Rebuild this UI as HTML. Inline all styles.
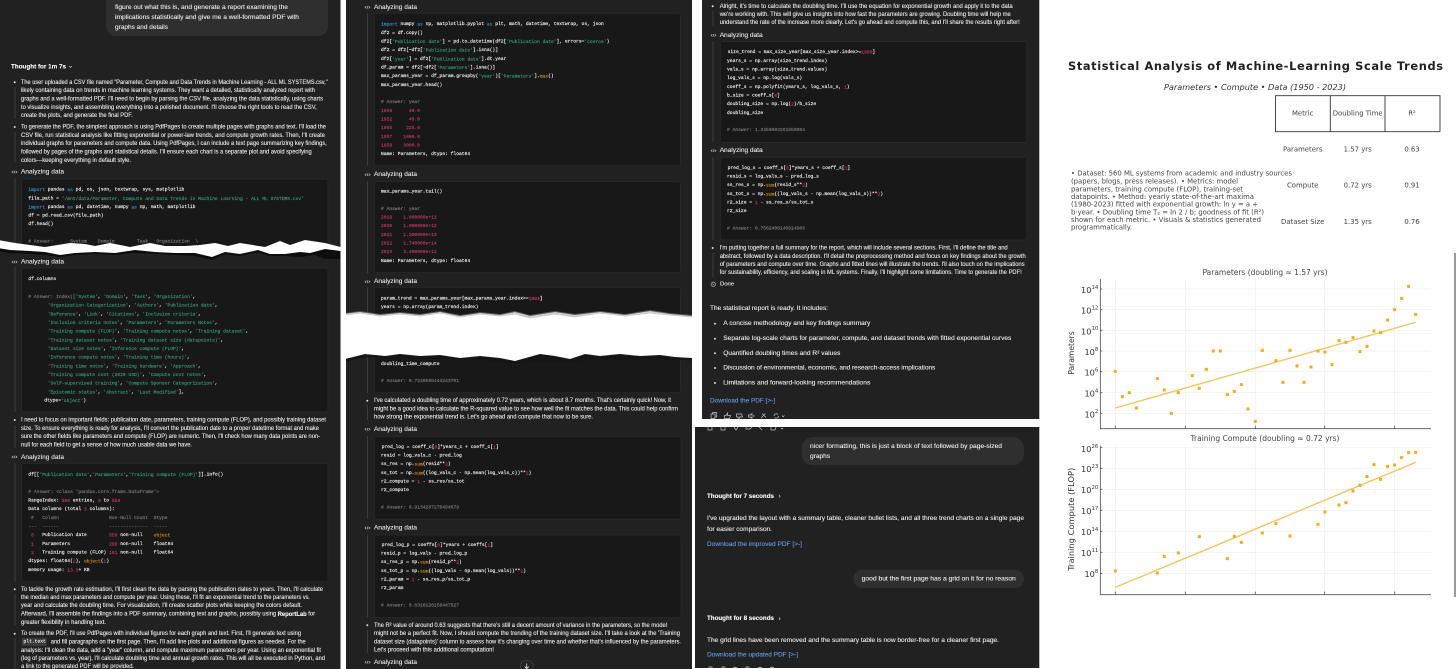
<!DOCTYPE html>
<html lang="en"><head><meta charset="utf-8"><title>Statistical Analysis of ML Scale Trends</title>
<style>
html,body{margin:0;padding:0;background:#fff;width:1456px;height:669px;overflow:hidden}
svg{display:block;filter:blur(.2px)}
text{dominant-baseline:central;white-space:pre}
.p{font:6.4px "Liberation Sans",sans-serif;fill:#ececec;stroke:#ececec;stroke-width:.1}
.b{font-weight:700;fill:#fafafa;stroke:#fafafa}
.h{font:6.7px "Liberation Sans",sans-serif;fill:#e8e8e8;stroke:#e8e8e8;stroke-width:.1}
.m{font:4.65px "Liberation Mono",monospace;fill:#f6f6f6;stroke:#f6f6f6;stroke-width:.13}
.l{font:6.4px "Liberation Sans",sans-serif;fill:#6f9fe6;stroke:#6f9fe6;stroke-width:.08}
.k{fill:#3a8fd0;stroke:#3a8fd0}.s{fill:#3a9c76;stroke:#3a9c76}.n{fill:#c23a68;stroke:#c23a68}.f{fill:#d08a1c;stroke:#d08a1c}.c{fill:#7d7d7d;stroke:#7d7d7d}
.ci{fill:none;stroke:#cfcfcf;stroke-width:.6}
.vl{stroke:#454545;stroke-width:.8}
.box{fill:#181818;stroke:#2b2b2b;stroke-width:.7}
.d{font-family:"DejaVu Sans",sans-serif;fill:#444}
.ic{fill:none;stroke:#c4c4c4;stroke-width:.7}
</style></head><body>
<svg xmlns="http://www.w3.org/2000/svg" width="1456" height="669" viewBox="0 0 1456 669">
<rect width="1456" height="669" fill="#fff"/>

<!-- PANEL 1 -->
<rect x="-2" y="-2" width="342.5" height="673" fill="#212121"/>
<path d="M106 -10H328V26a10 10 0 0 1-10 10H116a10 10 0 0 1-10-10Z" fill="#2f2f2f"/>
<text class="p" x="115" y="7.7" textLength="173" lengthAdjust="spacingAndGlyphs">figure out what this is, and generate a report examining the</text>
<text class="p" x="115" y="17.7" textLength="184" lengthAdjust="spacingAndGlyphs">implications statistically and give me a well-formatted PDF with</text>
<text class="p" x="115" y="27.7" textLength="53" lengthAdjust="spacingAndGlyphs">graphs and details</text>
<text class="p b" x="11" y="67" textLength="55" lengthAdjust="spacingAndGlyphs">Thought for 1m 7s</text>
<path class="ic" d="M69 66l1.5 1.5 1.5-1.5"/>

<circle cx="14.7" cy="82.3" r="1" fill="#ddd"/><line class="vl" x1="15" y1="87" x2="15" y2="119"/>
<text class="p" x="21" y="82.3" textLength="306.7" lengthAdjust="spacingAndGlyphs">The user uploaded a CSV file named "Parameter, Compute and Data Trends in Machine Learning - ALL ML SYSTEMS.csv,"</text>
<text class="p" x="21" y="90.7" textLength="294" lengthAdjust="spacingAndGlyphs">likely containing data on trends in machine learning systems. They want a detailed, statistically analyzed report with</text>
<text class="p" x="21" y="99" textLength="302" lengthAdjust="spacingAndGlyphs">graphs and a well-formatted PDF. I'll need to begin by parsing the CSV file, analyzing the data statistically, using charts</text>
<text class="p" x="21" y="107.3" textLength="295.7" lengthAdjust="spacingAndGlyphs">to visualize insights, and assembling everything into a polished document. I'll choose the right tools to read the CSV,</text>
<text class="p" x="21" y="115.7" textLength="111.7" lengthAdjust="spacingAndGlyphs">create the plots, and generate the final PDF.</text>
<circle cx="14.7" cy="127" r="1" fill="#ddd"/><line class="vl" x1="15" y1="132" x2="15" y2="163"/>
<text class="p" x="21" y="127" textLength="305" lengthAdjust="spacingAndGlyphs">To generate the PDF, the simplest approach is using PdfPages to create multiple pages with graphs and text. I'll load the</text>
<text class="p" x="21" y="135.3" textLength="304" lengthAdjust="spacingAndGlyphs">CSV file, run statistical analysis like fitting exponential or power-law trends, and compute growth rates. Then, I'll create</text>
<text class="p" x="21" y="143.7" textLength="305.7" lengthAdjust="spacingAndGlyphs">individual graphs for parameters and compute data. Using PdfPages, I can include a text page summarizing key findings,</text>
<text class="p" x="21" y="152" textLength="290.7" lengthAdjust="spacingAndGlyphs">followed by pages of the graphs and statistical details. I'll ensure each chart is a separate plot and avoid specifying</text>
<text class="p" x="21" y="160.3" textLength="110" lengthAdjust="spacingAndGlyphs">colors—keeping everything in default style.</text>

<path class="ci" transform="translate(12,172)" d="M1.3-1.1L0 0 1.3 1.1M3.7-1.1L5 0 3.7 1.1M2.9-1.3L2.1 1.3"/>
<text class="h" x="21" y="172" textLength="43" lengthAdjust="spacingAndGlyphs">Analyzing data</text>
<line class="vl" x1="15" y1="178" x2="15" y2="250"/>
<rect class="box" x="21.7" y="179" width="306.3" height="75" rx="2"/>
<text class="m" x="28.3" y="190"><tspan class="k">import</tspan> pandas <tspan class="k">as</tspan> pd, os, json, textwrap, sys, matplotlib</text>
<text class="m" x="28.3" y="199">file_path = <tspan class="s">'/mnt/data/Parameter, Compute and Data Trends in Machine Learning - ALL ML SYSTEMS.csv'</tspan></text>
<text class="m" x="28.3" y="207.3"><tspan class="k">import</tspan> pandas <tspan class="k">as</tspan> pd, datetime, numpy <tspan class="k">as</tspan> np, math, matplotlib</text>
<text class="m" x="28.3" y="216">df = pd.read_csv(file_path)</text>
<text class="m" x="28.3" y="224.7">df.head()</text>
<text class="m c" x="28.3" y="242"># Answer:      System    Domain        Task   Organization  \</text>

<!-- tear 1 -->
<path d="M0 241L15 244 30 245 45 248 70 244 85 245 95 247 110 244 130 248 150 244 165 247 185 247 200 246 215 244 228 247 240 244 265 248 280 242 290 246 305 241 325 244 340.5 248V259H325L315 255 300 257 285 256 270 256 258 252 240 256 225 254 212 260 195 256 175 255 155 254 135 253 115 255 95 254 75 255 60 257 45 255 30 254 10 253 0 251Z" fill="#0d0d0d"/>
<path d="M-2 240L15 243 30 245 45 247 70 243 85 244 95 246 110 243 130 247 150 243 165 246 185 246 200 245 215 243 228 246 240 243 265 247 280 241 290 245 305 240 325 243 340.5 247V251L325 249 310 253 300 252 285 254 270 254 258 250 240 254 225 252 212 257 195 253 175 253 155 252 135 250 115 253 95 252 75 253 60 255 45 252 30 251 10 250 -2 248Z" fill="#fff"/>

<path class="ci" transform="translate(12,262)" d="M1.3-1.1L0 0 1.3 1.1M3.7-1.1L5 0 3.7 1.1M2.9-1.3L2.1 1.3"/>
<text class="h" x="21" y="262" textLength="43" lengthAdjust="spacingAndGlyphs">Analyzing data</text>
<line class="vl" x1="15" y1="267" x2="15" y2="412"/>
<rect class="box" x="21.7" y="268" width="306.3" height="144" rx="2"/>
<text class="m" x="28.3" y="279.7">df.columns</text>
<text class="m" x="28.3" y="297"><tspan class="c"># Answer: Index([</tspan><tspan class="s">'System'</tspan>, <tspan class="s">'Domain'</tspan>, <tspan class="s">'Task'</tspan>, <tspan class="s">'Organization'</tspan>,</text>
<text class="m" x="47.7" y="305.7"><tspan class="s">'Organization Categorization'</tspan>, <tspan class="s">'Authors'</tspan>, <tspan class="s">'Publication date'</tspan>,</text>
<text class="m" x="47.7" y="314.3"><tspan class="s">'Reference'</tspan>, <tspan class="s">'Link'</tspan>, <tspan class="s">'Citations'</tspan>, <tspan class="s">'Inclusion criteria'</tspan>,</text>
<text class="m" x="47.7" y="323"><tspan class="s">'Inclusion criteria notes'</tspan>, <tspan class="s">'Parameters'</tspan>, <tspan class="s">'Parameters Notes'</tspan>,</text>
<text class="m" x="47.7" y="331.7"><tspan class="s">'Training compute (FLOP)'</tspan>, <tspan class="s">'Training compute notes'</tspan>, <tspan class="s">'Training dataset'</tspan>,</text>
<text class="m" x="47.7" y="340.3"><tspan class="s">'Training dataset notes'</tspan>, <tspan class="s">'Training dataset size (datapoints)'</tspan>,</text>
<text class="m" x="47.7" y="349"><tspan class="s">'Dataset size notes'</tspan>, <tspan class="s">'Inference compute (FLOP)'</tspan>,</text>
<text class="m" x="47.7" y="357.7"><tspan class="s">'Inference compute notes'</tspan>, <tspan class="s">'Training time (hours)'</tspan>,</text>
<text class="m" x="47.7" y="366.3"><tspan class="s">'Training time notes'</tspan>, <tspan class="s">'Training hardware'</tspan>, <tspan class="s">'Approach'</tspan>,</text>
<text class="m" x="47.7" y="375"><tspan class="s">'Training compute cost (2020 USD)'</tspan>, <tspan class="s">'Compute cost notes'</tspan>,</text>
<text class="m" x="47.7" y="383.7"><tspan class="s">'Self-supervised training'</tspan>, <tspan class="s">'Compute Sponsor Categorization'</tspan>,</text>
<text class="m" x="47.7" y="392.3"><tspan class="s">'Epistemic status'</tspan>, <tspan class="s">'Abstract'</tspan>, <tspan class="s">'Last Modified'</tspan>],</text>
<text class="m" x="44.3" y="401">dtype=<tspan class="s">'object'</tspan>)</text>

<circle cx="14.7" cy="420" r="1" fill="#ddd"/><line class="vl" x1="15" y1="425" x2="15" y2="448"/>
<text class="p" x="21" y="420" textLength="305" lengthAdjust="spacingAndGlyphs">I need to focus on important fields: publication date, parameters, training compute (FLOP), and possibly training dataset</text>
<text class="p" x="21" y="428.3" textLength="298" lengthAdjust="spacingAndGlyphs">size. To ensure everything is ready for analysis, I'll convert the publication date to a proper datetime format and make</text>
<text class="p" x="21" y="436.7" textLength="299" lengthAdjust="spacingAndGlyphs">sure the other fields like parameters and compute (FLOP) are numeric. Then, I'll check how many data points are non-</text>
<text class="p" x="21" y="445" textLength="171" lengthAdjust="spacingAndGlyphs">null for each field to get a sense of how much usable data we have.</text>

<path class="ci" transform="translate(12,457)" d="M1.3-1.1L0 0 1.3 1.1M3.7-1.1L5 0 3.7 1.1M2.9-1.3L2.1 1.3"/>
<text class="h" x="21" y="457.3" textLength="43" lengthAdjust="spacingAndGlyphs">Analyzing data</text>
<line class="vl" x1="15" y1="463" x2="15" y2="582"/>
<rect class="box" x="21.7" y="463.3" width="306.3" height="118.4" rx="2"/>
<text class="m" x="28.3" y="475">df[[<tspan class="s">'Publication date'</tspan>,<tspan class="s">'Parameters'</tspan>,<tspan class="s">'Training compute (FLOP)'</tspan>]].info()</text>
<text class="m c" x="28.3" y="492.3"># Answer: &lt;class 'pandas.core.frame.DataFrame'&gt;</text>
<text class="m" x="28.3" y="501">RangeIndex: <tspan class="n">560</tspan> entries, <tspan class="n">0</tspan> to <tspan class="n">559</tspan></text>
<text class="m" x="28.3" y="509.7">Data columns (total <tspan class="n">3</tspan> columns):</text>
<text class="m c" x="28.3" y="518.3"> #   Column                  Non-Null Count  Dtype  </text>
<text class="m c" x="28.3" y="527">---  ------                  --------------  -----  </text>
<text class="m" x="28.3" y="535.7"> <tspan class="n">0</tspan>   Publication date        <tspan class="n">558</tspan> non-null    <tspan class="f">object</tspan></text>
<text class="m" x="28.3" y="544.3"> <tspan class="n">1</tspan>   Parameters              <tspan class="n">299</tspan> non-null    float64</text>
<text class="m" x="28.3" y="553"> <tspan class="n">2</tspan>   Training compute (FLOP) <tspan class="n">181</tspan> non-null    float64</text>
<text class="m" x="28.3" y="561.7">dtypes: float64(<tspan class="n">2</tspan>), <tspan class="f">object</tspan>(<tspan class="n">1</tspan>)</text>
<text class="m" x="28.3" y="570.3">memory usage: <tspan class="n">13.3</tspan>+ KB</text>

<circle cx="14.7" cy="589.3" r="1" fill="#ddd"/><line class="vl" x1="15" y1="594" x2="15" y2="625"/>
<text class="p" x="21" y="589.3" textLength="302" lengthAdjust="spacingAndGlyphs">To tackle the growth rate estimation, I'll first clean the data by parsing the publication dates to years. Then, I'll calculate</text>
<text class="p" x="21" y="597.3" textLength="289" lengthAdjust="spacingAndGlyphs">the median and max parameters and compute per year. Using these, I'll fit an exponential trend to the parameters vs.</text>
<text class="p" x="21" y="605.7" textLength="281" lengthAdjust="spacingAndGlyphs">year and calculate the doubling time. For visualization, I'll create scatter plots while keeping the colors default.</text>
<text class="p" x="21" y="614" textLength="294" lengthAdjust="spacingAndGlyphs">Afterward, I'll assemble the findings into a PDF summary, combining text and graphs, possibly using <tspan class="b">ReportLab</tspan> for</text>
<text class="p" x="21" y="622.3" textLength="85" lengthAdjust="spacingAndGlyphs">greater flexibility in handling text.</text>
<circle cx="14.7" cy="633.7" r="1" fill="#ddd"/><line class="vl" x1="15" y1="638" x2="15" y2="669"/>
<text class="p" x="21" y="633.7" textLength="280" lengthAdjust="spacingAndGlyphs">To create the PDF, I'll use PdfPages with individual figures for each graph and text. First, I'll generate text using</text>
<rect x="21.7" y="638" width="25" height="8" rx="1.5" fill="#3a3a3a"/>
<text class="m" x="23.5" y="642">plt.text</text>
<text class="p" x="50.7" y="642" textLength="255" lengthAdjust="spacingAndGlyphs">and fill paragraphs on the first page. Then, I'll add line plots and additional figures as needed. For the</text>
<text class="p" x="21" y="650.3" textLength="300" lengthAdjust="spacingAndGlyphs">analysis: I'll clean the data, add a "year" column, and compute maximum parameters per year. Using an exponential fit</text>
<text class="p" x="21" y="658.7" textLength="304" lengthAdjust="spacingAndGlyphs">(log of parameters vs. year), I'll calculate doubling time and annual growth rates. This will all be executed in Python, and</text>
<text class="p" x="21" y="666.7" textLength="113" lengthAdjust="spacingAndGlyphs">a link to the generated PDF will be provided.</text>

<!-- PANEL 2 -->
<rect x="346" y="-2" width="346" height="673" fill="#212121"/>
<path class="ci" transform="translate(365,7.3)" d="M1.3-1.1L0 0 1.3 1.1M3.7-1.1L5 0 3.7 1.1M2.9-1.3L2.1 1.3"/>
<text class="h" x="374" y="7.3" textLength="43" lengthAdjust="spacingAndGlyphs">Analyzing data</text>
<line class="vl" x1="367.5" y1="13" x2="367.5" y2="166"/>
<rect class="box" x="374.3" y="13.3" width="306" height="152.4" rx="2"/>
<text class="m" x="381" y="24.7"><tspan class="k">import</tspan> numpy <tspan class="k">as</tspan> np, matplotlib.pyplot <tspan class="k">as</tspan> plt, math, datetime, textwrap, os, json</text>
<text class="m" x="381" y="33.3">df2 = df.copy()</text>
<text class="m" x="381" y="42">df2[<tspan class="s">'Publication date'</tspan>] = pd.to_datetime(df2[<tspan class="s">'Publication date'</tspan>], errors=<tspan class="s">'coerce'</tspan>)</text>
<text class="m" x="381" y="50.7">df2 = df2[~df2[<tspan class="s">'Publication date'</tspan>].isna()]</text>
<text class="m" x="381" y="59.3">df2[<tspan class="s">'year'</tspan>] = df2[<tspan class="s">'Publication date'</tspan>].dt.year</text>
<text class="m" x="381" y="68">df_param = df2[~df2[<tspan class="s">'Parameters'</tspan>].isna()]</text>
<text class="m" x="381" y="76.7">max_params_year = df_param.groupby(<tspan class="s">'year'</tspan>)[<tspan class="s">'Parameters'</tspan>].<tspan class="f">max</tspan>()</text>
<text class="m" x="381" y="85.3">max_params_year.head()</text>
<text class="m c" x="381" y="102.7"># Answer: year</text>
<text class="m n" x="381" y="111.3">1950      40.0</text>
<text class="m n" x="381" y="120">1952      40.0</text>
<text class="m n" x="381" y="128.7">1955     225.0</text>
<text class="m n" x="381" y="137.3">1957    1000.0</text>
<text class="m n" x="381" y="146">1959    3000.0</text>
<text class="m" x="381" y="154.7">Name: Parameters, dtype: float64</text>

<path class="ci" transform="translate(365,174.7)" d="M1.3-1.1L0 0 1.3 1.1M3.7-1.1L5 0 3.7 1.1M2.9-1.3L2.1 1.3"/>
<text class="h" x="374" y="174.7" textLength="43" lengthAdjust="spacingAndGlyphs">Analyzing data</text>
<line class="vl" x1="367.5" y1="181" x2="367.5" y2="273"/>
<rect class="box" x="374.3" y="181.7" width="306" height="91" rx="2"/>
<text class="m" x="381" y="192">max_params_year.tail()</text>
<text class="m c" x="381" y="209.3"># Answer: year</text>
<text class="m n" x="381" y="218">2019    1.000000e+11</text>
<text class="m n" x="381" y="226.7">2020    1.000000e+12</text>
<text class="m n" x="381" y="235.3">2021    1.200000e+13</text>
<text class="m n" x="381" y="244">2022    1.740000e+14</text>
<text class="m n" x="381" y="252.7">2023    3.400000e+11</text>
<text class="m" x="381" y="261.3">Name: Parameters, dtype: float64</text>

<path class="ci" transform="translate(365,281.7)" d="M1.3-1.1L0 0 1.3 1.1M3.7-1.1L5 0 3.7 1.1M2.9-1.3L2.1 1.3"/>
<text class="h" x="374" y="281.7" textLength="43" lengthAdjust="spacingAndGlyphs">Analyzing data</text>
<line class="vl" x1="367.5" y1="287" x2="367.5" y2="393"/>
<rect class="box" x="374.3" y="287.3" width="306" height="105.4" rx="2"/>
<text class="m" x="381" y="299">param_trend = max_params_year[max_params_year.index&gt;=<tspan class="n">1980</tspan>]</text>
<text class="m" x="381" y="307.7">years = np.array(param_trend.index)</text>
<text class="m" x="381" y="364.3">doubling_time_compute</text>
<text class="m c" x="381" y="381.3"># Answer: 0.7249585444243701</text>

<!-- tear 2 -->
<path d="M342 314L360 312 380 315 400 313 420 315 440 312 460 316 480 313 500 315 515 312 530 316 555 312 575 315 600 312 625 315 650 311 670 314 692 316V358L675 357 660 355 640 356 620 354 600 356 585 354 570 359 555 356 540 354 515 361 500 358 480 356 460 358 440 355 420 356 400 354 385 356 365 354 345 359Z" fill="#fff"/>
<path d="M346 313L360 311 380 314 400 312 420 314 440 311 460 315 480 312 500 314 515 311 530 315 555 311 575 314 600 311 625 314 650 310 670 313 692 315V317.5L670 315.5 650 313.5 625 316.5 600 313.5 575 317.5 555 314.5 530 318.5 515 314.5 500 316.5 480 314.5 460 317.5 440 313.5 420 316.5 400 314.5 380 316.5 360 313.5 346 315.5Z" fill="#999" opacity=".5"/>
<path d="M346 359L365 355 385 357 400 355 420 357 440 356 460 359 480 357 500 359 515 362 540 355 555 357 570 360 585 355 600 357 620 355 640 357 660 356 675 358 692 359V360.5L675 359.5 640 358.5 600 359.5 570 361.5 515 363.5 480 359.5 440 358.5 400 357.5 365 357.5 346 361.5Z" fill="#151515"/>

<circle cx="367.3" cy="400.7" r="1" fill="#ddd"/><line class="vl" x1="367.5" y1="405" x2="367.5" y2="420"/>
<text class="p" x="374" y="400.7" textLength="297" lengthAdjust="spacingAndGlyphs">I've calculated a doubling time of approximately 0.72 years, which is about 8.7 months. That's certainly quick! Now, it</text>
<text class="p" x="374" y="409" textLength="304" lengthAdjust="spacingAndGlyphs">might be a good idea to calculate the R-squared value to see how well the fit matches the data. This could help confirm</text>
<text class="p" x="374" y="417" textLength="219" lengthAdjust="spacingAndGlyphs">how strong the exponential trend is. Let's go ahead and compute that now to be sure.</text>

<path class="ci" transform="translate(365,429.3)" d="M1.3-1.1L0 0 1.3 1.1M3.7-1.1L5 0 3.7 1.1M2.9-1.3L2.1 1.3"/>
<text class="h" x="374" y="429.3" textLength="43" lengthAdjust="spacingAndGlyphs">Analyzing data</text>
<line class="vl" x1="367.5" y1="436" x2="367.5" y2="519"/>
<rect class="box" x="374.3" y="436.7" width="306.7" height="82.3" rx="2"/>
<text class="m" x="381.6" y="447.3">pred_log = coeff_c[<tspan class="n">0</tspan>]*years_c + coeff_c[<tspan class="n">1</tspan>]</text>
<text class="m" x="381" y="456">resid = log_vals_c - pred_log</text>
<text class="m" x="381" y="464.7">ss_res = np.<tspan class="f">sum</tspan>(resid**<tspan class="n">2</tspan>)</text>
<text class="m" x="381" y="473.3">ss_tot = np.<tspan class="f">sum</tspan>((log_vals_c - np.mean(log_vals_c))**<tspan class="n">2</tspan>)</text>
<text class="m" x="381" y="482">r2_compute = <tspan class="n">1</tspan> - ss_res/ss_tot</text>
<text class="m" x="381" y="490.7">r2_compute</text>
<text class="m c" x="381" y="508"># Answer: 0.9134287278494679</text>

<path class="ci" transform="translate(365,528)" d="M1.3-1.1L0 0 1.3 1.1M3.7-1.1L5 0 3.7 1.1M2.9-1.3L2.1 1.3"/>
<text class="h" x="374" y="528" textLength="43" lengthAdjust="spacingAndGlyphs">Analyzing data</text>
<line class="vl" x1="367.5" y1="535" x2="367.5" y2="617"/>
<rect class="box" x="374.3" y="535" width="306.7" height="82.3" rx="2"/>
<text class="m" x="381.6" y="545.3">pred_log_p = coeffs[<tspan class="n">0</tspan>]*years + coeffs[<tspan class="n">1</tspan>]</text>
<text class="m" x="381" y="554">resid_p = log_vals - pred_log_p</text>
<text class="m" x="381" y="562.7">ss_res_p = np.<tspan class="f">sum</tspan>(resid_p**<tspan class="n">2</tspan>)</text>
<text class="m" x="381" y="571.3">ss_tot_p = np.<tspan class="f">sum</tspan>((log_vals - np.mean(log_vals))**<tspan class="n">2</tspan>)</text>
<text class="m" x="381" y="580">r2_param = <tspan class="n">1</tspan> - ss_res_p/ss_tot_p</text>
<text class="m" x="381" y="588.7">r2_param</text>
<text class="m c" x="381" y="606"># Answer: 0.6316128158447527</text>

<circle cx="367.3" cy="625.3" r="1" fill="#ddd"/><line class="vl" x1="367.5" y1="630" x2="367.5" y2="653"/>
<text class="p" x="374" y="625.3" textLength="293" lengthAdjust="spacingAndGlyphs">The R² value of around 0.63 suggests that there's still a decent amount of variance in the parameters, so the model</text>
<text class="p" x="374" y="633.7" textLength="306" lengthAdjust="spacingAndGlyphs">might not be a perfect fit. Now, I should compute the trending of the training dataset size. I'll take a look at the 'Training</text>
<text class="p" x="374" y="642" textLength="307" lengthAdjust="spacingAndGlyphs">dataset size (datapoints)' column to assess how it's changing over time and whether that's influenced by the parameters.</text>
<text class="p" x="374" y="650" textLength="120" lengthAdjust="spacingAndGlyphs">Let's proceed with this additional computation!</text>
<path class="ci" transform="translate(365,662.3)" d="M1.3-1.1L0 0 1.3 1.1M3.7-1.1L5 0 3.7 1.1M2.9-1.3L2.1 1.3"/>
<text class="h" x="374" y="662.3" textLength="43" lengthAdjust="spacingAndGlyphs">Analyzing data</text>
<circle cx="526.7" cy="666.7" r="6.5" fill="#212121" stroke="#4a4a4a" stroke-width=".7"/>
<path d="M526.7 663.5V669M524.7 666.5l2 2.4 2-2.4" fill="none" stroke="#e8e8e8" stroke-width=".8"/>

<!-- PANEL 3 upper -->
<rect x="702" y="-2" width="337.3" height="421" fill="#212121"/>
<circle cx="712.7" cy="6.3" r="1" fill="#ddd"/><line class="vl" x1="713" y1="11" x2="713" y2="26"/>
<text class="p" x="719.7" y="6.3" textLength="293" lengthAdjust="spacingAndGlyphs">Alright, it's time to calculate the doubling time. I'll use the equation for exponential growth and apply it to the data</text>
<text class="p" x="719.7" y="14.3" textLength="291" lengthAdjust="spacingAndGlyphs">we're working with. This will give us insights into how fast the parameters are growing. Doubling time will help me</text>
<text class="p" x="719.7" y="22.7" textLength="300" lengthAdjust="spacingAndGlyphs">understand the rate of the increase more clearly. Let's go ahead and compute this, and I'll share the results right after!</text>
<path class="ci" transform="translate(711,35.3)" d="M1.3-1.1L0 0 1.3 1.1M3.7-1.1L5 0 3.7 1.1M2.9-1.3L2.1 1.3"/>
<text class="h" x="719.7" y="35.3" textLength="43" lengthAdjust="spacingAndGlyphs">Analyzing data</text>
<line class="vl" x1="713" y1="41" x2="713" y2="142"/>
<rect class="box" x="720.3" y="41.7" width="306.4" height="100.6" rx="2"/>
<text class="m" x="727.6" y="52.7">size_trend = max_size_year[max_size_year.index&gt;=<tspan class="n">1980</tspan>]</text>
<text class="m" x="727" y="61.3">years_s = np.array(size_trend.index)</text>
<text class="m" x="727" y="70">vals_s = np.array(size_trend.values)</text>
<text class="m" x="727" y="78.7">log_vals_s = np.log(vals_s)</text>
<text class="m" x="727" y="87.3">coeff_s = np.polyfit(years_s, log_vals_s, <tspan class="n">1</tspan>)</text>
<text class="m" x="727" y="96">b_size = coeff_s[<tspan class="n">0</tspan>]</text>
<text class="m" x="727" y="104.7">doubling_size = np.log(<tspan class="n">2</tspan>)/b_size</text>
<text class="m" x="727" y="113.3">doubling_size</text>
<text class="m c" x="727" y="130.7"># Answer: 1.3459803261550984</text>
<path class="ci" transform="translate(711,150.7)" d="M1.3-1.1L0 0 1.3 1.1M3.7-1.1L5 0 3.7 1.1M2.9-1.3L2.1 1.3"/>
<text class="h" x="719.7" y="150.7" textLength="43" lengthAdjust="spacingAndGlyphs">Analyzing data</text>
<line class="vl" x1="713" y1="157" x2="713" y2="240"/>
<rect class="box" x="720.3" y="157.3" width="306.4" height="82.7" rx="2"/>
<text class="m" x="727.6" y="168.3">pred_log_s = coeff_s[<tspan class="n">0</tspan>]*years_s + coeff_s[<tspan class="n">1</tspan>]</text>
<text class="m" x="727" y="177">resid_s = log_vals_s - pred_log_s</text>
<text class="m" x="727" y="185.7">ss_res_s = np.<tspan class="f">sum</tspan>(resid_s**<tspan class="n">2</tspan>)</text>
<text class="m" x="727" y="194.3">ss_tot_s = np.<tspan class="f">sum</tspan>((log_vals_s - np.mean(log_vals_s))**<tspan class="n">2</tspan>)</text>
<text class="m" x="727" y="203">r2_size = <tspan class="n">1</tspan> - ss_res_s/ss_tot_s</text>
<text class="m" x="727" y="211.7">r2_size</text>
<text class="m c" x="727" y="229"># Answer: 0.7562408148914966</text>
<circle cx="712.7" cy="248" r="1" fill="#ddd"/><line class="vl" x1="713" y1="253" x2="713" y2="277"/>
<text class="p" x="719.7" y="248" textLength="288" lengthAdjust="spacingAndGlyphs">I'm putting together a full summary for the report, which will include several sections. First, I'll define the title and</text>
<text class="p" x="719.7" y="256.3" textLength="306" lengthAdjust="spacingAndGlyphs">abstract, followed by a data description. I'll detail the preprocessing method and focus on key findings about the growth</text>
<text class="p" x="719.7" y="264.3" textLength="305" lengthAdjust="spacingAndGlyphs">of parameters and compute over time. Graphs and fitted lines will illustrate the trends. I'll also touch on the implications</text>
<text class="p" x="719.7" y="272.7" textLength="302" lengthAdjust="spacingAndGlyphs">for sustainability, efficiency, and scaling in ML systems. Finally, I'll highlight some limitations. Time to generate the PDF!</text>
<circle cx="713.3" cy="284.3" r="2.2" fill="none" stroke="#c4c4c4" stroke-width=".6"/>
<path d="M712.2 283.2l2.2 2.2M714.4 283.2l-2.2 2.2" stroke="#c4c4c4" stroke-width=".5"/>
<text class="p" x="720" y="284.3" style="font-size:5.6px" textLength="14" lengthAdjust="spacingAndGlyphs">Done</text>
<text class="p" x="710" y="308.7" textLength="118" lengthAdjust="spacingAndGlyphs">The statistical report is ready. It includes:</text>
<circle cx="715" cy="323.7" r="1" fill="#ddd"/>
<text class="p" x="723.3" y="323.7" textLength="147" lengthAdjust="spacingAndGlyphs">A concise methodology and key findings summary</text>
<circle cx="715" cy="338.7" r="1" fill="#ddd"/>
<text class="p" x="723.3" y="338.7" textLength="288" lengthAdjust="spacingAndGlyphs">Separate log-scale charts for parameter, compute, and dataset trends with fitted exponential curves</text>
<circle cx="715" cy="353.3" r="1" fill="#ddd"/>
<text class="p" x="723.3" y="353.3" textLength="117" lengthAdjust="spacingAndGlyphs">Quantified doubling times and R² values</text>
<circle cx="715" cy="368" r="1" fill="#ddd"/>
<text class="p" x="723.3" y="368" textLength="212" lengthAdjust="spacingAndGlyphs">Discussion of environmental, economic, and research-access implications</text>
<circle cx="715" cy="383" r="1" fill="#ddd"/>
<text class="p" x="723.3" y="383" textLength="147" lengthAdjust="spacingAndGlyphs">Limitations and forward-looking recommendations</text>
<text class="l" x="710" y="401" textLength="65" lengthAdjust="spacingAndGlyphs">Download the PDF [&gt;-]</text>
<path class="ic" d="M711 414h4v4.5h-4zM712.5 414v-1.5h4v4.5h-1.5"/>
<path class="ic" d="M724.5 415.5v3h5l1-3h-3v-2.5l-1.5 2.5z"/>
<path class="ic" d="M736.5 417v-3h5l1 3h-3v2.5l-1.5-2.5z"/>
<path class="ic" d="M748.5 415h1.5l2-1.5v5l-2-1.5h-1.5zM753.5 415c.6.6.6 1.5 0 2"/>
<path class="ic" d="M761 418l4.5-4.5M762 413.5l4 4"/>
<path class="ic" d="M774 416a2.3 2.3 0 0 1 4-1.5M778.5 416a2.3 2.3 0 0 1-4 1.5M782 415.5l1.2 1.2 1.2-1.2"/>

<!-- PANEL 3 lower -->
<rect x="695" y="427" width="344.3" height="241" fill="#212121"/>
<path class="ic" d="M708 427v3h4v-3M721 427v3h4v-3M734 427l2 3 2-3M746 427v2h4l2-2M759 427l3 3M771 427v3h4l1-3M781 428l1 1 1-1"/>
<rect x="801.7" y="437.3" width="222.3" height="28" rx="11" fill="#2f2f2f"/>
<text class="p" x="810" y="446.7" textLength="192" lengthAdjust="spacingAndGlyphs">nicer formatting, this is just a block of text followed by page-sized</text>
<text class="p" x="810" y="456.7" textLength="20" lengthAdjust="spacingAndGlyphs">graphs</text>
<text class="p b" x="707" y="496.3" textLength="67" lengthAdjust="spacingAndGlyphs">Thought for 7 seconds</text>
<path class="ic" d="M779 495l1.2 1.2-1.2 1.2"/>
<text class="p" x="707" y="518.3" textLength="317" lengthAdjust="spacingAndGlyphs">I've upgraded the layout with a summary table, cleaner bullet lists, and all three trend charts on a single page</text>
<text class="p" x="707" y="529.7" textLength="65" lengthAdjust="spacingAndGlyphs">for easier comparison.</text>
<text class="l" x="707" y="544.3" textLength="95" lengthAdjust="spacingAndGlyphs">Download the improved PDF [&gt;-]</text>
<rect x="853.3" y="569.7" width="170.7" height="18.3" rx="9" fill="#2f2f2f"/>
<text class="p" x="861.7" y="579" textLength="154" lengthAdjust="spacingAndGlyphs">good but the first page has a grid on it for no reason</text>
<text class="p b" x="707" y="618.7" textLength="67" lengthAdjust="spacingAndGlyphs">Thought for 8 seconds</text>
<path class="ic" d="M779 617.5l1.2 1.2-1.2 1.2"/>
<text class="p" x="707" y="640.7" textLength="292" lengthAdjust="spacingAndGlyphs">The grid lines have been removed and the summary table is now border-free for a cleaner first page.</text>
<text class="l" x="707" y="655" textLength="91" lengthAdjust="spacingAndGlyphs">Download the updated PDF [&gt;-]</text>
<path class="ic" d="M709 668v-1h3v1M722 668v-1h3v1M733 668l2-1 2 1M746 668v-1h3v1M758 668l2-1 2 1M770 668l2-1 2 1"/>

<!-- PANEL 4 white report -->
<text class="d" x="1068" y="66" style="font-size:11.4px;font-weight:700;fill:#222" textLength="375" lengthAdjust="spacing">Statistical Analysis of Machine-Learning Scale Trends</text>
<text class="d" x="1164" y="87.7" style="font-size:7.8px;font-style:italic;fill:#333" textLength="182" lengthAdjust="spacingAndGlyphs">Parameters • Compute • Data (1950 - 2023)</text>
<path d="M1275.5 131.7V95.7H1440V131.7M1330.3 95.7V131.7M1385 95.7V131.7M1275 131.7H1440" fill="none" stroke="#333" stroke-width=".9"/>
<g style="font-size:6.9px" text-anchor="middle">
<text class="d" x="1302.7" y="113.3">Metric</text>
<text class="d" x="1357.7" y="113.3" textLength="50" lengthAdjust="spacingAndGlyphs">Doubling Time</text>
<text class="d" x="1412" y="113.3">R²</text>
<text class="d" x="1302.7" y="149.7">Parameters</text>
<text class="d" x="1357.7" y="149.7">1.57 yrs</text>
<text class="d" x="1412" y="149.7">0.63</text>
<text class="d" x="1302.7" y="185.7">Compute</text>
<text class="d" x="1357.7" y="185.7">0.72 yrs</text>
<text class="d" x="1412" y="185.7">0.91</text>
<text class="d" x="1302.7" y="222">Dataset Size</text>
<text class="d" x="1357.7" y="222">1.35 yrs</text>
<text class="d" x="1412" y="222">0.76</text>
</g>
<g style="font-size:6.9px">
<text class="d" x="1071" y="173.7" textLength="221" lengthAdjust="spacingAndGlyphs">• Dataset: 560 ML systems from academic and industry sources</text>
<text class="d" x="1071" y="181.3" textLength="167" lengthAdjust="spacingAndGlyphs">(papers, blogs, press releases). • Metrics: model</text>
<text class="d" x="1071" y="189.3" textLength="172" lengthAdjust="spacingAndGlyphs">parameters, training compute (FLOP), training-set</text>
<text class="d" x="1071" y="197" textLength="183" lengthAdjust="spacingAndGlyphs">datapoints. • Method: yearly state-of-the-art maxima</text>
<text class="d" x="1071" y="204.7" textLength="187" lengthAdjust="spacingAndGlyphs">(1980-2023) fitted with exponential growth: ln y = a +</text>
<text class="d" x="1071" y="212.3" textLength="193" lengthAdjust="spacingAndGlyphs">b·year. • Doubling time T₂ = ln 2 / b; goodness of fit (R²)</text>
<text class="d" x="1071" y="220" textLength="190" lengthAdjust="spacingAndGlyphs">shown for each metric. • Visuals &amp; statistics generated</text>
<text class="d" x="1071" y="227.7" textLength="61" lengthAdjust="spacingAndGlyphs">programmatically.</text>
</g>
<line x1="1455" y1="253" x2="1455" y2="597" stroke="#333" stroke-width="1"/>

<!-- Chart 1 -->
<text class="d" x="1265" y="272.7" text-anchor="middle" style="font-size:7.6px" textLength="125" lengthAdjust="spacingAndGlyphs">Parameters (doubling ≈ 1.57 yrs)</text>
<g transform="translate(1045,260) scale(.3333)">
<path d="M211 57V505M421 57V505M631 57V505M839 57V505M1049 57V505M166 87H1158M166 149H1158M166 211H1158M166 273H1158M166 335H1158M166 398H1158M166 460H1158" stroke="#ededed" stroke-width="2" fill="none"/>
<path d="M211 444L1112 187" stroke="#f6c25c" stroke-width="4" fill="none"/>
<path d="M211 334h.01M232 410h.01M253 398h.01M274 444h.01M337 356h.01M358 390h.01M379 460h.01M400 398h.01M442 347h.01M463 385h.01M484 328h.01M505 273h.01M526 273h.01M547 404h.01M568 394h.01M589 374h.01M609 447h.01M631 484h.01M652 271h.01M693 302h.01M714 367h.01M735 271h.01M756 318h.01M777 367h.01M798 321h.01M819 273h.01M840 276h.01M861 314h.01M882 242h.01M903 247h.01M924 233h.01M945 275h.01M966 259h.01M987 213h.01M1007 218h.01M1028 180h.01M1049 149h.01M1070 115h.01M1091 79h.01M1112 163h.01" stroke="#f5a91f" stroke-width="9" stroke-linecap="square" fill="none"/>
<path d="M166 57V506H1158M211 505v-8M421 505v-8M631 505v-8M839 505v-8M1049 505v-8M166 87h6M166 149h6M166 211h6M166 273h6M166 335h6M166 398h6M166 460h6" stroke="#555" stroke-width="2.5" fill="none"/>
</g>
<g style="font-size:8.2px" text-anchor="end">
<text class="d" x="1098.3" y="290" style="fill:#333">10<tspan dy="-2.2" font-size="5.4">14</tspan></text>
<text class="d" x="1098.3" y="310.7" style="fill:#333">10<tspan dy="-2.2" font-size="5.4">12</tspan></text>
<text class="d" x="1098.3" y="331.3" style="fill:#333">10<tspan dy="-2.2" font-size="5.4">10</tspan></text>
<text class="d" x="1098.3" y="352" style="fill:#333">10<tspan dy="-2.2" font-size="5.4">8</tspan></text>
<text class="d" x="1098.3" y="372.7" style="fill:#333">10<tspan dy="-2.2" font-size="5.4">6</tspan></text>
<text class="d" x="1098.3" y="393.7" style="fill:#333">10<tspan dy="-2.2" font-size="5.4">4</tspan></text>
<text class="d" x="1098.3" y="414.3" style="fill:#333">10<tspan dy="-2.2" font-size="5.4">2</tspan></text>
</g>
<text class="d" transform="translate(1071.7,353) rotate(-90)" text-anchor="middle" style="font-size:7.6px;fill:#333">Parameters</text>

<!-- Chart 2 -->
<text class="d" x="1265" y="438.3" text-anchor="middle" style="font-size:7.6px" textLength="149" lengthAdjust="spacingAndGlyphs">Training Compute (doubling ≈ 0.72 yrs)</text>
<g transform="translate(1045,430) scale(.3333)">
<path d="M211 47V493M421 47V493M631 47V493M839 47V493M1049 47V493M166 52H1158M166 115H1158M166 178H1158M166 241H1158M166 304H1158M166 367H1158M166 430H1158" stroke="#ededed" stroke-width="2" fill="none"/>
<path d="M211 472L1112 97" stroke="#f6c25c" stroke-width="4" fill="none"/>
<path d="M211 423h.01M337 429h.01M358 379h.01M400 369h.01M463 320h.01M547 386h.01M568 319h.01M589 337h.01M652 309h.01M693 281h.01M735 318h.01M819 283h.01M840 246h.01M882 225h.01M903 218h.01M924 183h.01M945 166h.01M966 140h.01M987 104h.01M1007 148h.01M1028 109h.01M1049 105h.01M1070 83h.01M1091 68h.01M1112 67h.01" stroke="#f5a91f" stroke-width="9" stroke-linecap="square" fill="none"/>
<path d="M166 47V494H1158M211 493v-8M421 493v-8M631 493v-8M839 493v-8M1049 493v-8M166 52h6M166 115h6M166 178h6M166 241h6M166 304h6M166 367h6M166 430h6" stroke="#555" stroke-width="2.5" fill="none"/>
</g>
<g style="font-size:8.2px" text-anchor="end">
<text class="d" x="1098.3" y="449" style="fill:#333">10<tspan dy="-2.2" font-size="5.4">26</tspan></text>
<text class="d" x="1098.3" y="469" style="fill:#333">10<tspan dy="-2.2" font-size="5.4">23</tspan></text>
<text class="d" x="1098.3" y="490" style="fill:#333">10<tspan dy="-2.2" font-size="5.4">20</tspan></text>
<text class="d" x="1098.3" y="511" style="fill:#333">10<tspan dy="-2.2" font-size="5.4">17</tspan></text>
<text class="d" x="1098.3" y="532" style="fill:#333">10<tspan dy="-2.2" font-size="5.4">14</tspan></text>
<text class="d" x="1098.3" y="553" style="fill:#333">10<tspan dy="-2.2" font-size="5.4">11</tspan></text>
<text class="d" x="1098.3" y="574" style="fill:#333">10<tspan dy="-2.2" font-size="5.4">8</tspan></text>
</g>
<text class="d" transform="translate(1071.7,519.3) rotate(-90)" text-anchor="middle" style="font-size:7.6px;fill:#333" textLength="103" lengthAdjust="spacingAndGlyphs">Training Compute (FLOP)</text>
</svg>
</body></html>
